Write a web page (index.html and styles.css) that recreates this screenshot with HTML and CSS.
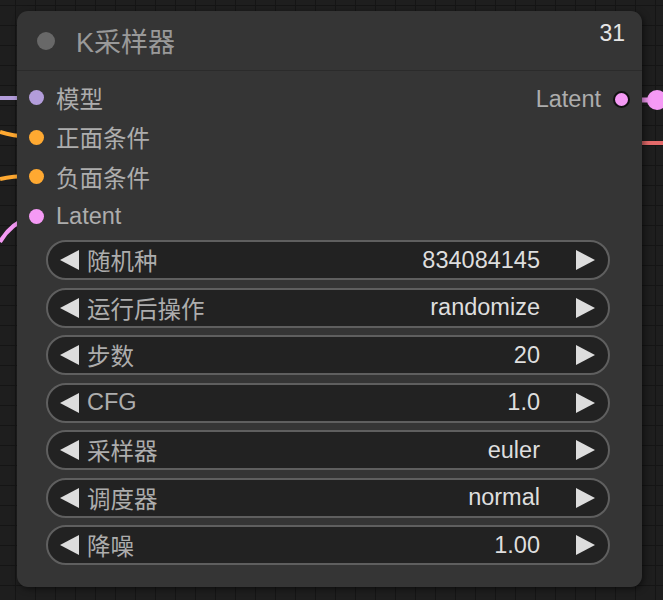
FILE: index.html
```html
<!DOCTYPE html>
<html lang="zh-CN">
<head>
  <meta charset="UTF-8" />
  <meta name="viewport" content="width=device-width, initial-scale=1.0"/>
  <title>K采样器</title>
  <link rel="stylesheet" href="styles.css">
</head>
<body>
  <!-- links behind the node -->
  <svg class="links" width="663" height="600" viewBox="0 0 663 600">
    <path d="M0 98 L30 98" stroke="#b39ddb" stroke-width="4" fill="none"/>
    <path d="M0 132 Q12 136 30 137" stroke="#ffa931" stroke-width="4" fill="none"/>
    <path d="M0 179 Q12 176 30 176" stroke="#ffa931" stroke-width="4" fill="none"/>
    <path d="M0 242 Q10 224 30 217" stroke="#f59af5" stroke-width="4" fill="none"/>
    <path d="M630 100 L663 100" stroke="#f59af5" stroke-width="5" fill="none"/>
    <circle cx="657" cy="100" r="10" fill="#f59af5"/>
    <path d="M630 143 L663 143" stroke="#e46a6a" stroke-width="4" fill="none"/>
  </svg>

  <div class="node">
    <div class="node-title">
      <span class="status-dot"></span>
      <span class="title">K采样器</span>
      <span class="node-id">31</span>
    </div>

    <div class="node-body">
      <div class="slots">
        <div class="inputs">
          <div class="slot"><span class="dot model"></span>模型</div>
          <div class="slot"><span class="dot cond"></span>正面条件</div>
          <div class="slot"><span class="dot cond"></span>负面条件</div>
          <div class="slot"><span class="dot latent"></span>Latent</div>
        </div>
        <div class="outputs">
          <div class="slot out">Latent<span class="dot latent ring"></span></div>
        </div>
      </div>

      <div class="widgets">
        <div class="widget">
          <svg class="arrow" viewBox="0 0 19 20"><polygon points="19,0 19,20 0,10"/></svg>
          <span class="label">随机种</span>
          <span class="value">834084145</span>
          <svg class="arrow" viewBox="0 0 19 20"><polygon points="0,0 0,20 19,10"/></svg>
        </div>
        <div class="widget">
          <svg class="arrow" viewBox="0 0 19 20"><polygon points="19,0 19,20 0,10"/></svg>
          <span class="label">运行后操作</span>
          <span class="value">randomize</span>
          <svg class="arrow" viewBox="0 0 19 20"><polygon points="0,0 0,20 19,10"/></svg>
        </div>
        <div class="widget">
          <svg class="arrow" viewBox="0 0 19 20"><polygon points="19,0 19,20 0,10"/></svg>
          <span class="label">步数</span>
          <span class="value">20</span>
          <svg class="arrow" viewBox="0 0 19 20"><polygon points="0,0 0,20 19,10"/></svg>
        </div>
        <div class="widget">
          <svg class="arrow" viewBox="0 0 19 20"><polygon points="19,0 19,20 0,10"/></svg>
          <span class="label">CFG</span>
          <span class="value">1.0</span>
          <svg class="arrow" viewBox="0 0 19 20"><polygon points="0,0 0,20 19,10"/></svg>
        </div>
        <div class="widget">
          <svg class="arrow" viewBox="0 0 19 20"><polygon points="19,0 19,20 0,10"/></svg>
          <span class="label">采样器</span>
          <span class="value">euler</span>
          <svg class="arrow" viewBox="0 0 19 20"><polygon points="0,0 0,20 19,10"/></svg>
        </div>
        <div class="widget">
          <svg class="arrow" viewBox="0 0 19 20"><polygon points="19,0 19,20 0,10"/></svg>
          <span class="label">调度器</span>
          <span class="value">normal</span>
          <svg class="arrow" viewBox="0 0 19 20"><polygon points="0,0 0,20 19,10"/></svg>
        </div>
        <div class="widget">
          <svg class="arrow" viewBox="0 0 19 20"><polygon points="19,0 19,20 0,10"/></svg>
          <span class="label">降噪</span>
          <span class="value">1.00</span>
          <svg class="arrow" viewBox="0 0 19 20"><polygon points="0,0 0,20 19,10"/></svg>
        </div>
      </div>
    </div>
  </div>
</body>
</html>
```

FILE: styles.css
```css
html, body { margin: 0; height: 100%; overflow: hidden; }
body {
  background-color: #1e1e1e;
  background-image:
    linear-gradient(#151515 1px, transparent 1px),
    linear-gradient(90deg, #151515 1px, transparent 1px);
  background-size: 20px 20px;
  background-position: 15px 5px;
  font-family: "Liberation Sans", "Noto Sans CJK SC", sans-serif;
  padding: 11px 0 0 17px;
  box-sizing: border-box;
}

.links { position: absolute; left: 0; top: 0; }

/* node */
.node {
  position: relative;
  z-index: 1;
  width: 625px;
  height: 576px;
  background: #353535;
  border-radius: 11px;
  box-shadow: 2px 2px 6px rgba(0, 0, 0, 0.5);
}

.node-title {
  display: flex;
  align-items: center;
  height: 59px;
  padding: 0 17px 0 20px;
  border-bottom: 1px solid #2b2b2b;
}
.status-dot {
  width: 18px;
  height: 18px;
  border-radius: 50%;
  background: #686868;
  margin-top: 1px;
}
.title {
  flex: 1;
  margin-left: 21px;
  font-size: 27px;
  color: #999;
}
.node-id {
  align-self: flex-start;
  margin-top: 11px;
  font-size: 23px;
  line-height: 1;
  color: #e6e6e6;
}

.node-body { padding-top: 7px; }

/* slots */
.slots { display: flex; justify-content: space-between; }
.slot {
  display: flex;
  align-items: center;
  height: 39.5px;
  font-size: 23.5px;
  color: #adadad;
}
.inputs .slot { padding-left: 12px; }
.inputs .dot { margin-right: 12px; }
.slot.out { padding-right: 12px; padding-top: 2px; }
.slot.out .dot { margin-left: 12px; }

.dot {
  width: 15px;
  height: 15px;
  border-radius: 50%;
  flex: none;
}
.dot.model { background: #b39ddb; }
.dot.cond { background: #ffa931; }
.dot.latent { background: #f59af5; }
.dot.ring { width: 13px; height: 13px; border: 2px solid #111; }

/* widgets */
.widgets {
  display: flex;
  flex-direction: column;
  gap: 7.5px;
  margin: 4px 32px 0 29px;
}
.widget {
  display: flex;
  align-items: center;
  height: 40px;
  box-sizing: border-box;
  padding: 0 13px 0 12px;
  background: #222;
  border: 2px solid #5f5f5f;
  border-radius: 20px;
  font-size: 23.5px;
}
.arrow { width: 19px; height: 20px; fill: #ddd; flex: none; }
.label { margin-left: 8px; color: #adadad; flex: 1; }
.value { color: #dedede; margin-right: 36px; }
```
